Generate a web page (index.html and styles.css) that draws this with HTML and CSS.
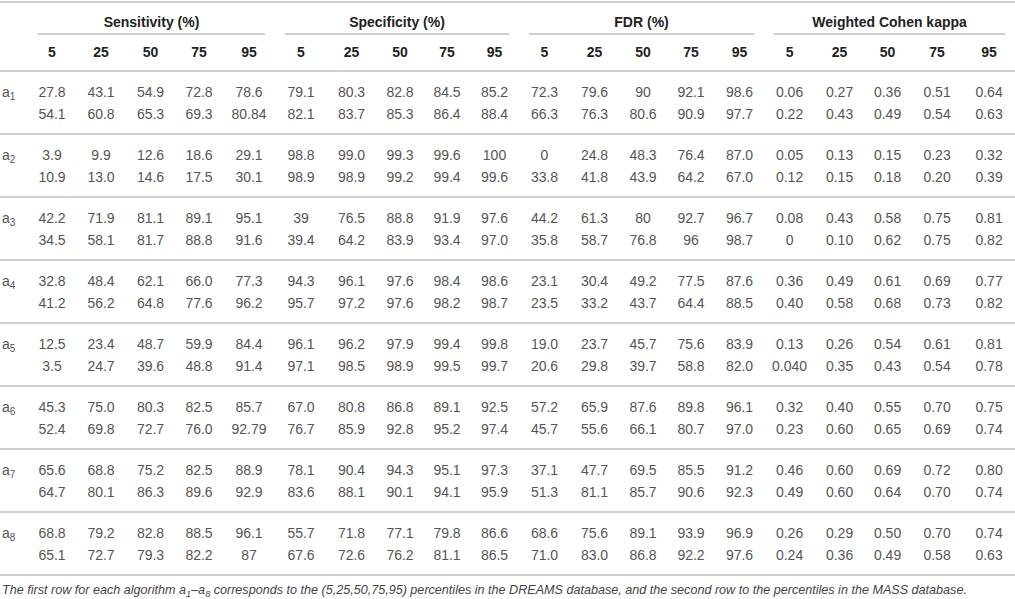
FILE: index.html
```html
<!DOCTYPE html>
<html lang="en">
<head>
    <meta charset="UTF-8">
    <meta name="viewport" content="width=device-width, initial-scale=1.0">
    <title>Percentiles per Algorithm</title>
    <link rel="stylesheet" href="styles.css">
</head>
<body>
    <table class="results">
        <colgroup>
            <col class="w28">
            <col class="w48"><col class="w50"><col class="w49"><col class="w48"><col class="w52">
            <col class="w52"><col class="w49"><col class="w48"><col class="w46"><col class="w49">
            <col class="w51"><col class="w49"><col class="w48"><col class="w48"><col class="w49">
            <col class="w51"><col class="w49"><col class="w47"><col class="w52"><col class="w52">
        </colgroup>
        <thead>
            <tr class="groups">
                <th></th>
                <th colspan="5"><div class="grp">Sensitivity (%)</div></th>
                <th colspan="5"><div class="grp">Specificity (%)</div></th>
                <th colspan="5"><div class="grp">FDR (%)</div></th>
                <th colspan="5"><div class="grp">Weighted Cohen kappa</div></th>
            </tr>
            <tr class="pcts">
                <th></th>
                <th>5</th><th>25</th><th>50</th><th>75</th><th>95</th>
                <th>5</th><th>25</th><th>50</th><th>75</th><th>95</th>
                <th>5</th><th>25</th><th>50</th><th>75</th><th>95</th>
                <th>5</th><th>25</th><th>50</th><th>75</th><th>95</th>
            </tr>
        </thead>
        <tbody class="algo">
            <tr class="first">
                <th class="name" rowspan="2">a<sub>1</sub></th>
                <td>27.8</td><td>43.1</td><td>54.9</td><td>72.8</td><td>78.6</td>
                <td>79.1</td><td>80.3</td><td>82.8</td><td>84.5</td><td>85.2</td>
                <td>72.3</td><td>79.6</td><td>90</td><td>92.1</td><td>98.6</td>
                <td>0.06</td><td>0.27</td><td>0.36</td><td>0.51</td><td>0.64</td>
            </tr>
            <tr class="second">
                <td>54.1</td><td>60.8</td><td>65.3</td><td>69.3</td><td>80.84</td>
                <td>82.1</td><td>83.7</td><td>85.3</td><td>86.4</td><td>88.4</td>
                <td>66.3</td><td>76.3</td><td>80.6</td><td>90.9</td><td>97.7</td>
                <td>0.22</td><td>0.43</td><td>0.49</td><td>0.54</td><td>0.63</td>
            </tr>
        </tbody>
        <tbody class="algo">
            <tr class="first">
                <th class="name" rowspan="2">a<sub>2</sub></th>
                <td>3.9</td><td>9.9</td><td>12.6</td><td>18.6</td><td>29.1</td>
                <td>98.8</td><td>99.0</td><td>99.3</td><td>99.6</td><td>100</td>
                <td>0</td><td>24.8</td><td>48.3</td><td>76.4</td><td>87.0</td>
                <td>0.05</td><td>0.13</td><td>0.15</td><td>0.23</td><td>0.32</td>
            </tr>
            <tr class="second">
                <td>10.9</td><td>13.0</td><td>14.6</td><td>17.5</td><td>30.1</td>
                <td>98.9</td><td>98.9</td><td>99.2</td><td>99.4</td><td>99.6</td>
                <td>33.8</td><td>41.8</td><td>43.9</td><td>64.2</td><td>67.0</td>
                <td>0.12</td><td>0.15</td><td>0.18</td><td>0.20</td><td>0.39</td>
            </tr>
        </tbody>
        <tbody class="algo">
            <tr class="first">
                <th class="name" rowspan="2">a<sub>3</sub></th>
                <td>42.2</td><td>71.9</td><td>81.1</td><td>89.1</td><td>95.1</td>
                <td>39</td><td>76.5</td><td>88.8</td><td>91.9</td><td>97.6</td>
                <td>44.2</td><td>61.3</td><td>80</td><td>92.7</td><td>96.7</td>
                <td>0.08</td><td>0.43</td><td>0.58</td><td>0.75</td><td>0.81</td>
            </tr>
            <tr class="second">
                <td>34.5</td><td>58.1</td><td>81.7</td><td>88.8</td><td>91.6</td>
                <td>39.4</td><td>64.2</td><td>83.9</td><td>93.4</td><td>97.0</td>
                <td>35.8</td><td>58.7</td><td>76.8</td><td>96</td><td>98.7</td>
                <td>0</td><td>0.10</td><td>0.62</td><td>0.75</td><td>0.82</td>
            </tr>
        </tbody>
        <tbody class="algo">
            <tr class="first">
                <th class="name" rowspan="2">a<sub>4</sub></th>
                <td>32.8</td><td>48.4</td><td>62.1</td><td>66.0</td><td>77.3</td>
                <td>94.3</td><td>96.1</td><td>97.6</td><td>98.4</td><td>98.6</td>
                <td>23.1</td><td>30.4</td><td>49.2</td><td>77.5</td><td>87.6</td>
                <td>0.36</td><td>0.49</td><td>0.61</td><td>0.69</td><td>0.77</td>
            </tr>
            <tr class="second">
                <td>41.2</td><td>56.2</td><td>64.8</td><td>77.6</td><td>96.2</td>
                <td>95.7</td><td>97.2</td><td>97.6</td><td>98.2</td><td>98.7</td>
                <td>23.5</td><td>33.2</td><td>43.7</td><td>64.4</td><td>88.5</td>
                <td>0.40</td><td>0.58</td><td>0.68</td><td>0.73</td><td>0.82</td>
            </tr>
        </tbody>
        <tbody class="algo">
            <tr class="first">
                <th class="name" rowspan="2">a<sub>5</sub></th>
                <td>12.5</td><td>23.4</td><td>48.7</td><td>59.9</td><td>84.4</td>
                <td>96.1</td><td>96.2</td><td>97.9</td><td>99.4</td><td>99.8</td>
                <td>19.0</td><td>23.7</td><td>45.7</td><td>75.6</td><td>83.9</td>
                <td>0.13</td><td>0.26</td><td>0.54</td><td>0.61</td><td>0.81</td>
            </tr>
            <tr class="second">
                <td>3.5</td><td>24.7</td><td>39.6</td><td>48.8</td><td>91.4</td>
                <td>97.1</td><td>98.5</td><td>98.9</td><td>99.5</td><td>99.7</td>
                <td>20.6</td><td>29.8</td><td>39.7</td><td>58.8</td><td>82.0</td>
                <td>0.040</td><td>0.35</td><td>0.43</td><td>0.54</td><td>0.78</td>
            </tr>
        </tbody>
        <tbody class="algo">
            <tr class="first">
                <th class="name" rowspan="2">a<sub>6</sub></th>
                <td>45.3</td><td>75.0</td><td>80.3</td><td>82.5</td><td>85.7</td>
                <td>67.0</td><td>80.8</td><td>86.8</td><td>89.1</td><td>92.5</td>
                <td>57.2</td><td>65.9</td><td>87.6</td><td>89.8</td><td>96.1</td>
                <td>0.32</td><td>0.40</td><td>0.55</td><td>0.70</td><td>0.75</td>
            </tr>
            <tr class="second">
                <td>52.4</td><td>69.8</td><td>72.7</td><td>76.0</td><td>92.79</td>
                <td>76.7</td><td>85.9</td><td>92.8</td><td>95.2</td><td>97.4</td>
                <td>45.7</td><td>55.6</td><td>66.1</td><td>80.7</td><td>97.0</td>
                <td>0.23</td><td>0.60</td><td>0.65</td><td>0.69</td><td>0.74</td>
            </tr>
        </tbody>
        <tbody class="algo">
            <tr class="first">
                <th class="name" rowspan="2">a<sub>7</sub></th>
                <td>65.6</td><td>68.8</td><td>75.2</td><td>82.5</td><td>88.9</td>
                <td>78.1</td><td>90.4</td><td>94.3</td><td>95.1</td><td>97.3</td>
                <td>37.1</td><td>47.7</td><td>69.5</td><td>85.5</td><td>91.2</td>
                <td>0.46</td><td>0.60</td><td>0.69</td><td>0.72</td><td>0.80</td>
            </tr>
            <tr class="second">
                <td>64.7</td><td>80.1</td><td>86.3</td><td>89.6</td><td>92.9</td>
                <td>83.6</td><td>88.1</td><td>90.1</td><td>94.1</td><td>95.9</td>
                <td>51.3</td><td>81.1</td><td>85.7</td><td>90.6</td><td>92.3</td>
                <td>0.49</td><td>0.60</td><td>0.64</td><td>0.70</td><td>0.74</td>
            </tr>
        </tbody>
        <tbody class="algo">
            <tr class="first">
                <th class="name" rowspan="2">a<sub>8</sub></th>
                <td>68.8</td><td>79.2</td><td>82.8</td><td>88.5</td><td>96.1</td>
                <td>55.7</td><td>71.8</td><td>77.1</td><td>79.8</td><td>86.6</td>
                <td>68.6</td><td>75.6</td><td>89.1</td><td>93.9</td><td>96.9</td>
                <td>0.26</td><td>0.29</td><td>0.50</td><td>0.70</td><td>0.74</td>
            </tr>
            <tr class="second">
                <td>65.1</td><td>72.7</td><td>79.3</td><td>82.2</td><td>87</td>
                <td>67.6</td><td>72.6</td><td>76.2</td><td>81.1</td><td>86.5</td>
                <td>71.0</td><td>83.0</td><td>86.8</td><td>92.2</td><td>97.6</td>
                <td>0.24</td><td>0.36</td><td>0.49</td><td>0.58</td><td>0.63</td>
            </tr>
        </tbody>
    </table>
    <p class="note">The first row for each algorithm a<sub>1</sub>–a<sub>8</sub> corresponds to the (5,25,50,75,95) percentiles in the DREAMS database, and the second row to the percentiles in the MASS database.</p>
</body>
</html>
```

FILE: styles.css
```css
body {
    margin: 0;
    font-family: "Liberation Sans", Arial, sans-serif;
    color: #555;
    background-color: #fff;
}

.results {
    width: 1015px;
    margin-top: 1px;
    border-collapse: collapse;
    table-layout: fixed;
    border-top: 2px solid #cfcfcf;
    font-size: 14px;
}

.w28 { width: 28px; }
.w46 { width: 46px; }
.w47 { width: 47px; }
.w48 { width: 48px; }
.w49 { width: 49px; }
.w50 { width: 50px; }
.w51 { width: 51px; }
.w52 { width: 52px; }

th, td {
    padding: 0;
    line-height: 22px;
    text-align: center;
    font-weight: normal;
    white-space: nowrap;
}

.groups th {
    padding: 8px 10px 0;
    font-weight: bold;
    color: #222;
}

.grp {
    border-bottom: 2px solid #cfcfcf;
}

.pcts {
    border-bottom: 2px solid #cfcfcf;
}

.pcts th {
    padding: 6px 0 7px;
    font-weight: bold;
    color: #222;
}

.algo {
    border-bottom: 2px solid #cfcfcf;
}

.first td {
    padding-top: 9px;
}

.second td {
    padding-bottom: 8px;
}

.name {
    vertical-align: top;
    text-align: left;
    padding: 9px 0 0 2px;
}

sub {
    font-size: 10px;
    line-height: 0;
    vertical-align: -3px;
}

.note {
    margin: 6px 0 0 2px;
    font-size: 12.6px;
    line-height: 16px;
    font-style: italic;
    color: #444;
}

.note sub {
    font-size: 9px;
    vertical-align: -3px;
}
```
